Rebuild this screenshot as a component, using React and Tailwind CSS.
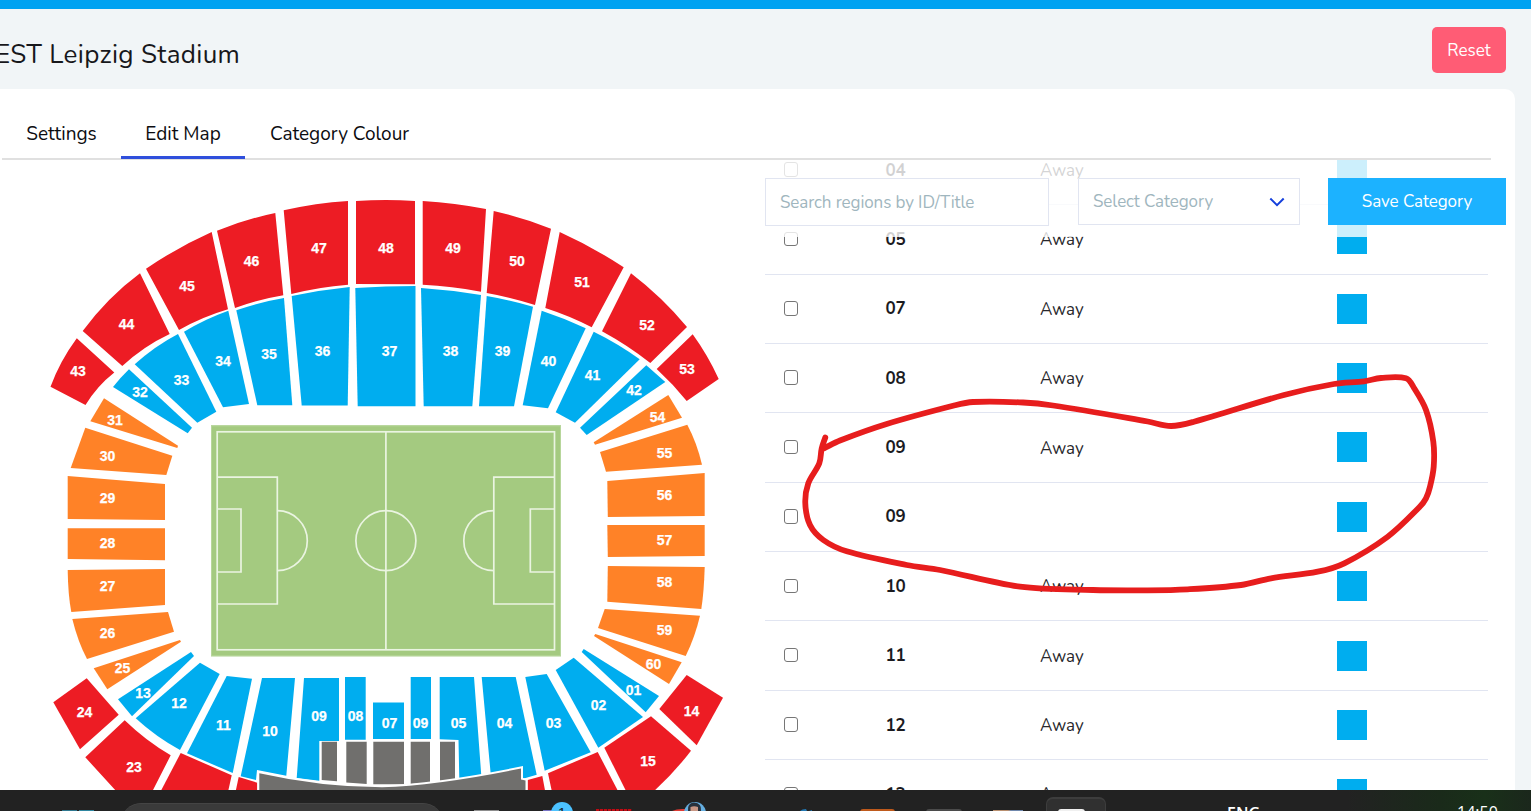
import React from "react";

const RED = "#ed1c24";
const BLUE = "#00adef";
const ORANGE = "#ff8227";
const GRAY = "#706f6d";

const blocks = [
  { c: RED, t: "43", x: 78, y: 371, d: "M50.5 386.8Q60 361 76.8 338.3L114.3 372.5Q97 386 85.5 405Z" },
  { c: RED, t: "44", x: 126.5, y: 324, d: "M82.7 331Q108 297 140 273.3L169.7 334Q144 346 122.3 366Z" },
  { c: RED, t: "45", x: 187, y: 286, d: "M146 268.7Q178 247 211.7 232L228 309.3Q202 317 179 330Z" },
  { c: RED, t: "46", x: 251.5, y: 261, d: "M217 230.7Q246 219 275.3 213L283.3 295.3Q258 299.5 235 308Z" },
  { c: RED, t: "47", x: 319, y: 248, d: "M283.7 210.3Q316 203 348 201L348 284.7Q319 287 291.3 294Z" },
  { c: RED, t: "48", x: 386, y: 248, d: "M356 201Q386 199 415 201L415 284.3L356 284Z" },
  { c: RED, t: "49", x: 453, y: 248, d: "M422.7 201Q455 203 486 209L481 291.7Q452 286 422.7 284.7Z" },
  { c: RED, t: "50", x: 517, y: 261, d: "M493.7 211Q523 217.5 551 228.7L535 305Q512 297.5 486.7 293Z" },
  { c: RED, t: "51", x: 582, y: 282, d: "M559.7 232Q593 247 623.7 267.3L591.7 327.3Q570 316 545.3 308Z" },
  { c: RED, t: "52", x: 647, y: 325, d: "M631 273.3Q662 297 687 327L650.3 363Q628 345.5 602 331.3Z" },
  { c: RED, t: "53", x: 687, y: 369, d: "M692.7 334.3Q708 355.5 718.7 379L686.7 401Q673 384 656.7 369Z" },
  { c: BLUE, t: "32", x: 140, y: 392, d: "M129 369.3L192 427.7L187.7 433.3L113 387Q120 378 129 369.3Z" },
  { c: BLUE, t: "33", x: 181.5, y: 380, d: "M134.7 364.3Q155 346 178 334L216.3 411.7L197.3 422.7Z" },
  { c: BLUE, t: "34", x: 223, y: 361, d: "M184 331.7Q205 319 228.3 310.7L249 404L223 407.3Z" },
  { c: BLUE, t: "35", x: 269, y: 354, d: "M236.3 310.3Q260 302 284 298L292.3 405.3L257.3 405.3Z" },
  { c: BLUE, t: "36", x: 322.5, y: 351, d: "M291.7 296Q320 290 349.7 287L347.7 405.5L301.7 405.5Z" },
  { c: BLUE, t: "37", x: 389.5, y: 351, d: "M355.3 288Q386 286 415.5 286L415.5 406.3L357.7 406.3Z" },
  { c: BLUE, t: "38", x: 450.5, y: 351, d: "M421 288Q451 290 481 295L472.3 406.3L423.7 406.3Z" },
  { c: BLUE, t: "39", x: 502.5, y: 351, d: "M486.7 296Q510 300 533 306.7L514 406.3L479 406.3Z" },
  { c: BLUE, t: "40", x: 548.5, y: 361, d: "M541.7 310.7Q564 318 585.7 328.3L548 408.3L522.7 405.3Z" },
  { c: BLUE, t: "41", x: 592.5, y: 375, d: "M593.7 331.7Q618 343.5 639.7 359.3L575 422.7L555.7 412.3Z" },
  { c: BLUE, t: "42", x: 634, y: 390, d: "M646.3 365.3L665.3 382L586.7 435L580 427.7Z" },
  { c: ORANGE, t: "31", x: 115, y: 420, d: "M104 398.3L178 445.7L177.3 448L90.3 421.3Z" },
  { c: ORANGE, t: "30", x: 107.5, y: 456, d: "M85.3 427.7L172.3 455.7L166.3 475L70.7 468Z" },
  { c: ORANGE, t: "29", x: 107.5, y: 498, d: "M67.7 476L165 484L165 520L67.7 519Z" },
  { c: ORANGE, t: "28", x: 107.5, y: 543, d: "M67.7 528.3L165 528.3L165 560.3L67.7 559Z" },
  { c: ORANGE, t: "27", x: 107.5, y: 586, d: "M67.7 570L165 569L165 605L71.3 612Q68 595 67.7 570Z" },
  { c: ORANGE, t: "26", x: 107.5, y: 633, d: "M72.3 619L168 612L174 631.7L87 659Q78 642 72.3 619Z" },
  { c: ORANGE, t: "25", x: 122.5, y: 668, d: "M93.7 668.3L180 640L181 641.7L107.3 689.3Z" },
  { c: ORANGE, t: "54", x: 657.5, y: 417, d: "M668.3 395L682 417.7L595 444.7L593.7 442.3Z" },
  { c: ORANGE, t: "55", x: 664.5, y: 453, d: "M687.3 424.7Q697 443 702 464.7L606 471.7L600 452Z" },
  { c: ORANGE, t: "56", x: 664.5, y: 495, d: "M607.3 481L704.7 473L704.7 516L607.8 517Z" },
  { c: ORANGE, t: "57", x: 664.5, y: 540, d: "M607.3 525L704.7 525L704.7 556L607.8 557Z" },
  { c: ORANGE, t: "58", x: 664.5, y: 582, d: "M607.8 566L704.7 567Q704 592 701.3 609L607.3 601.7Z" },
  { c: ORANGE, t: "59", x: 664.5, y: 630, d: "M604.7 609L700 615.7Q695 637 685.7 656L598 628Z" },
  { c: ORANGE, t: "60", x: 653.5, y: 664, d: "M595.3 634L681.7 662.3L669 684L594 636Z" },
  { c: BLUE, t: "13", x: 143, y: 693, d: "M191 652L194 656L132 716.3L118 699.3Z" },
  { c: BLUE, t: "12", x: 179, y: 703, d: "M200 662.7L219.7 674L180 750Q156 737 135.7 718.3Z" },
  { c: BLUE, t: "11", x: 223.5, y: 725, d: "M226.7 676L252 678.7L232.7 773L187 753.3Z" },
  { c: BLUE, t: "10", x: 270, y: 731, d: "M262 678L295 678L286.3 775.7L257 770L256 780L240.7 776.3Z" },
  { c: BLUE, t: "09", x: 319, y: 716, d: "M304 678L339 678L339 741L319.3 741L319.3 780.7L296.7 778Z" },
  { c: BLUE, t: "08", x: 355.5, y: 716, d: "M345 677H365.7V739.7H345Z" },
  { c: BLUE, t: "07", x: 389.5, y: 723, d: "M373 702.5H404V739H373Z" },
  { c: BLUE, t: "09", x: 420.5, y: 723, d: "M410.7 677H431V739H410.7Z" },
  { c: BLUE, t: "05", x: 458.5, y: 723, d: "M439.7 677H474L481.3 775.7L459.3 779.3L458.5 740L439.7 739.3Z" },
  { c: BLUE, t: "04", x: 504.5, y: 723, d: "M481.7 677H515.7L536.7 774.7L521.3 779.3L521 768.3L490.7 774Z" },
  { c: BLUE, t: "03", x: 553.5, y: 723, d: "M525.3 677L546.7 674L590.7 752.3L544.7 770.7Z" },
  { c: BLUE, t: "02", x: 598.5, y: 705, d: "M555.7 670L573.7 657.7L643 717L598.3 747.7Z" },
  { c: BLUE, t: "01", x: 633.5, y: 690, d: "M583.7 649L659 696L645.7 712.3L581.7 652Z" },
  { c: RED, t: "24", x: 84.5, y: 712, d: "M86.7 678.3L118.7 714.7L80 749.3L53.3 702.3Z" },
  { c: RED, t: "23", x: 134, y: 767, d: "M124.7 720.3Q146 741 170.7 755.3L152 792H117L85.3 757.3Z" },
  { c: RED, d: "M180.7 753L231.7 775.3L228 792H160.3Z" },
  { c: RED, d: "M238.7 777L257.3 782.7V792H235.5Z" },
  { c: RED, t: "14", x: 691.5, y: 711, d: "M686.7 675L723 697.7L696.7 745.3L659.3 709Z" },
  { c: RED, t: "15", x: 648, y: 761, d: "M651 716.3L691 750.7Q674 773 653 792H626.5L604.3 747.7Z" },
  { c: RED, d: "M597.7 752L618.5 792H552L548 773.3Z" },
  { c: RED, d: "M542.3 776L545.3 792H527.7V780Z" },
  { c: GRAY, d: "M321.7 741.7H337V781.3L321.7 780Z" },
  { c: GRAY, d: "M346.3 741.7H366.7V784L346.3 782.6Z" },
  { c: GRAY, d: "M373.3 741.7H404V784.3H373.3Z" },
  { c: GRAY, d: "M410.7 741.7H430V782.6L410.7 784Z" },
  { c: GRAY, d: "M440 741.7H455V780L440 781.5Z" },
];

function StadiumMap() {
  return (
    <svg className="block h-[630px] w-[765px]" viewBox="0 160 765 630" fontFamily='"Liberation Sans", Arial, sans-serif'>
      {blocks.map((b, i) => (
        <path key={i} d={b.d} fill={b.c} />
      ))}
      <path
        d="M259.3 773.3Q322 787.3 382 787.3Q438 785.5 521 768.5V779.5L525.5 780.5V794H259.3Z"
        fill={GRAY}
        stroke="#fff"
        strokeWidth="4"
        paintOrder="stroke"
      />
      <rect x="211" y="425.3" width="350" height="231" fill="#a4ca80" />
      <rect x="211.5" y="425.8" width="349" height="230" fill="none" stroke="#b7d69b" />
      <g fill="none" stroke="#eaf4e1" strokeWidth="1.7">
        <rect x="217.2" y="431.8" width="337.3" height="218" />
        <path d="M385.9 431.8V649.8" />
        <circle cx="385.9" cy="540.7" r="30" />
        <path d="M217.2 477.2H277.3V604H217.2M217.2 509H241V572H217.2" />
        <path d="M277.3 510.7A30 30 0 0 1 277.3 570.7" />
        <path d="M554.5 477.2H493.8V604H554.5M554.5 509H530.3V572H554.5" />
        <path d="M493.8 510.7A30 30 0 0 0 493.8 570.7" />
      </g>
      <g fill="#fff" fontSize="14" fontWeight="700" textAnchor="middle" stroke="#fff" strokeWidth="0.250">
        {blocks.map((b, i) =>
          b.t ? (
            <text key={i} x={b.x} y={b.y + 5}>
              {b.t}
            </text>
          ) : null
        )}
      </g>
    </svg>
  );
}

const rows = [
  ["04", "Away"],
  ["05", "Away"],
  ["07", "Away"],
  ["08", "Away"],
  ["09", "Away"],
  ["09", ""],
  ["10", "Away"],
  ["11", "Away"],
  ["12", "Away"],
  ["13", "Away"],
];

function RegionRow({ id, category }) {
  return (
    <div className="flex h-[69.375px] w-[723px] items-center border-b border-[#e1e5f1] pl-[18.5px]">
      <span className="mb-[0.8px] h-[14.5px] w-[14.5px] shrink-0 rounded-[3px] border-[1.3px] border-[#767676] bg-white" />
      <span className="ml-[87.5px] w-[154.5px] pt-px text-[17px] leading-6 font-bold tracking-[-0.1px] text-[#1b1b1f]">{id}</span>
      <span className="w-[297px] pt-[2px] text-[17px] leading-6 text-[#27272b]">{category}</span>
      <span className="mb-[0.15px] h-[30px] w-[30px] bg-[#00adef]" />
    </div>
  );
}

function Tab({ children, active, className }) {
  return (
    <div className={"flex h-[51px] items-end justify-center pb-[9px] text-[19px] leading-[26px] text-[#0c0c10] " + (active ? "border-b-[3px] border-[#2f4fdc] " : "border-b-[3px] border-transparent ") + className}>
      {children}
    </div>
  );
}

const strokePoints = [
  [825.3, 437.5], [821.7, 448.3], [819.3, 463.3], [808.3, 483.3], [805.3, 503.3], [810, 525], [823.3, 540], [846.7, 551.3],
  [906.7, 565], [940, 570], [1020, 586.7], [1093, 590], [1147.7, 590.3], [1187.7, 589.3], [1241, 585], [1271, 578.3],
  [1317.7, 571.7], [1344.3, 563.3], [1387.7, 536.7], [1419.3, 507.3], [1426, 498.3], [1430, 486.7], [1433.7, 466.7],
  [1433.3, 441.7], [1426, 410], [1414, 388], [1406, 378.3], [1381, 378], [1364, 381.3], [1334, 384], [1284, 395],
  [1194, 421.7], [1171, 426], [1147.7, 421.5], [1053, 405.5], [1023, 402.5], [973, 402], [955, 405.3], [886.7, 424],
  [840, 440.5], [824, 448.3],
];

function smoothPath(points) {
  let d = "M" + points[0].join(" ");
  for (let i = 0; i < points.length - 1; i++) {
    const a = points[Math.max(i - 1, 0)];
    const b = points[i];
    const c = points[i + 1];
    const e = points[Math.min(i + 2, points.length - 1)];
    const len = Math.hypot(c[0] - b[0], c[1] - b[1]) / 3;
    const t1 = Math.hypot(c[0] - a[0], c[1] - a[1]) || 1;
    const t2 = Math.hypot(e[0] - b[0], e[1] - b[1]) || 1;
    const p = [b[0] + ((c[0] - a[0]) / t1) * len, b[1] + ((c[1] - a[1]) / t1) * len];
    const q = [c[0] - ((e[0] - b[0]) / t2) * len, c[1] - ((e[1] - b[1]) / t2) * len];
    d += "C" + p.join(" ") + " " + q.join(" ") + " " + c.join(" ");
  }
  return d;
}

function Taskbar() {
  return (
    <footer className="relative z-20 flex h-[21px] w-full shrink-0 items-start overflow-hidden bg-[linear-gradient(90deg,#222222_0%,#222222_88%,#1a2a1a_94%,#193019_97%,#1b271c_100%)]">
      <span className="mt-[20px] ml-[62px] h-4 w-[15px] bg-[#2f7890]" />
      <span className="mt-[20px] ml-[2px] h-4 w-[15px] bg-[#2f86a0]" />
      <span className="mt-[13px] ml-[27px] h-10 w-[322px] shrink-0 rounded-[20px] border-t border-[#444] bg-[#3a3a3a]" />
      <span className="mt-[20px] ml-[31px] h-4 w-[25px] bg-[#8d8d8d]" />
      <span className="mt-[20px] ml-[44px] h-4 w-[10px] bg-[#7773c4]" />
      <span className="mt-[12px] -ml-[2px] flex h-[22px] w-[22px] shrink-0 justify-center rounded-full bg-[#4cc2ff] pt-[2px] font-['Liberation_Sans',sans-serif] text-[15px] leading-[18px] text-[#14212b]">1</span>
      <span className="mt-[19px] ml-[23px] h-4 w-[36px] bg-[repeating-linear-gradient(90deg,#c00c14_0_3px,#5a1014_3px_4px)]" />
      <svg className="mt-[12px] ml-[40px] h-[9px] w-[35px] shrink-0" viewBox="0 0 35 9">
        <path d="M0 9Q5 6.500 13 7V9Z" fill="#df3b34" />
        <circle cx="23" cy="11" r="11" fill="#65aee0" />
        <path d="M16 9Q15 1 22 0.500Q30 1 29 9Z" fill="#28313c" />
        <path d="M18.500 9V5Q22 3.500 26 5V9Z" fill="#c99784" />
      </svg>
      <svg className="mt-[19px] ml-[93px] h-[2px] w-[14px]" viewBox="0 0 14 2">
        <path d="M0 2Q2 0 6 0L7 2M9 2L12 1V2" fill="#2379b4" />
      </svg>
      <span className="mt-[19px] ml-[46px] h-4 w-[35px] rounded-t-[3px] bg-[#bf5a1c]" />
      <span className="mt-[19px] ml-[31px] h-4 w-[36px] rounded-t-[3px] bg-[#4b4b4b]" />
      <span className="mt-[20px] ml-[31px] h-4 w-[30px] bg-[linear-gradient(90deg,#b99070_50%,#7088ad_60%)]" />
      <span className="mt-[7px] ml-[23px] flex h-10 w-[60px] shrink-0 justify-center rounded-t-[7px] border-x border-t-2 border-[#3d3d3d] bg-[#303030] pt-[10px]">
        <span className="mr-[9px] h-6 w-[27px] rounded-t-[3px] bg-[#f0f0f0]" />
      </span>
      <span className="mt-[14px] ml-[121px] w-[40px] shrink-0 font-['Open_Sans',sans-serif] text-[16px] leading-[18px] font-semibold text-white">ENG</span>
      <span className="mt-[13px] ml-[190px] w-[46px] shrink-0 font-['Open_Sans',sans-serif] text-[16px] leading-[18px] text-white">14:50</span>
    </footer>
  );
}

export default function App() {
  return (
    <div className="relative flex h-[811px] w-[1531px] flex-col overflow-hidden bg-[#f1f5f7] font-['Nunito',Lato,'Noto_Sans',sans-serif]">
      <div className="h-[9px] shrink-0 bg-[#00a2f1]" />
      <header className="flex h-[80px] shrink-0 items-center justify-between pr-[25px]">
        <h1 className="-ml-[5px] pt-[11px] text-[26px] leading-9 tracking-[0.35px] whitespace-nowrap text-[#17171b]">EST Leipzig Stadium</h1>
        <button className="mt-[2px] h-[46px] w-[74px] rounded-[5px] bg-[#ff5c75] pt-[2px] text-[17px] text-white">Reset</button>
      </header>
      <main className="flex h-[701px] w-[1515px] shrink-0 flex-col overflow-hidden rounded-tr-[10px] bg-white">
        <nav className="mt-[19px] ml-[2px] flex h-[52px] w-[1489px] shrink-0 border-b-2 border-[#e0e0e0]">
          <Tab className="w-[119px]">Settings</Tab>
          <Tab active className="w-[124px]">Edit Map</Tab>
          <Tab className="w-[189px]">Category Colour</Tab>
        </nav>
        <div className="flex h-[630px] shrink-0">
          <StadiumMap />
          <section className="relative h-[630px] w-[741px] overflow-hidden">
            <div className="mt-[-24.175px]">
              {rows.map((r, i) => (
                <RegionRow key={i} id={r[0]} category={r[1]} />
              ))}
            </div>
            <div className="absolute inset-x-0 top-0 flex h-[77px] items-start bg-white/80 pt-[18px]">
              <div className="flex h-[48px] w-[284px] items-center border border-[#e1e5f1] bg-white pt-px pl-[14px] text-[17px] tracking-[-0.1px] text-[#9fb6be]">Search regions by ID/Title</div>
              <div className="ml-[29px] flex h-[47px] w-[222px] items-center justify-between border border-[#e1e5f1] bg-white pr-[14px] pl-[14px] text-[17px] tracking-[-0.1px] text-[#9fb6be]">
                <span className="pt-px">Select Category</span>
                <svg className="h-[10px] w-[16px]" viewBox="0 0 16 10" fill="none" stroke="#1540dc" strokeWidth="2">
                  <path d="M1.300 1.500L8 8.200L14.700 1.500" />
                </svg>
              </div>
              <button className="ml-[28px] h-[47px] w-[178px] bg-[#1cb2ff] pt-px text-[17px] tracking-[-0.07px] text-white">Save Category</button>
            </div>
          </section>
        </div>
      </main>
      <Taskbar />
      <svg className="pointer-events-none absolute top-0 left-0 z-10 h-[811px] w-[1531px]" viewBox="0 0 1531 811" fill="none" stroke="#e71d1d" strokeWidth="5.800" strokeLinecap="round" strokeLinejoin="round">
        <path d={smoothPath(strokePoints)} />
      </svg>
    </div>
  );
}
